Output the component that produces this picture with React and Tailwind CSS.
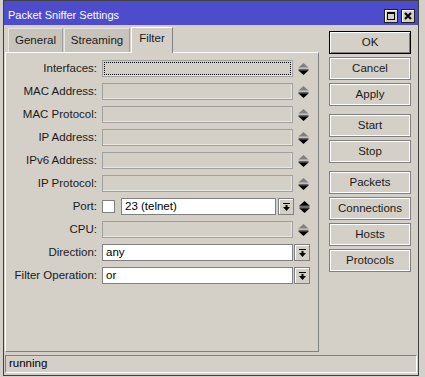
import React from 'react';

const FONT = { fontFamily: '"Liberation Sans", Arial, sans-serif' };

function Spinner({ upActive }) {
  return (
    <svg width="11" height="12" viewBox="0 0 11 12" className="shrink-0">
      <polygon points="5.5,0 10.5,4.5 0.5,4.5" fill={upActive ? '#000' : '#808080'} />
      <rect x="0.5" y="4.5" width="10" height="1" fill={upActive ? '#000' : '#a8a8a8'} />
      <rect x="0.5" y="6.5" width="10" height="1" fill="#000" />
      <polygon points="0.5,7.5 10.5,7.5 5.5,12" fill="#000" />
    </svg>
  );
}

function DropButton({ className = '' }) {
  return (
    <div className={`h-[17px] w-[16px] shrink-0 bg-[#d4d0c8] border border-[#808080] shadow-[inset_1px_1px_0_#fff] flex items-center justify-center ${className}`}>
      <svg width="7" height="8" viewBox="0 0 7 8">
        <rect x="0" y="0" width="7" height="1" fill="#000" />
        <rect x="2.5" y="2" width="2" height="2" fill="#000" />
        <polygon points="0,4 7,4 3.5,8" fill="#000" />
      </svg>
    </div>
  );
}

function Field({ focused }) {
  return (
    <div className="h-[17px] w-[191px] shrink-0 border border-[#a0a0a0] bg-[#d4d0c8] shadow-[inset_-1px_-1px_0_#e8e6e0] p-[1px]">
      {focused && <div className="h-full w-full border border-dotted border-black" />}
    </div>
  );
}

function Row({ label, children }) {
  return (
    <div className="flex h-[17px] items-center">
      <div className="w-[91px] shrink-0 text-right text-[11.5px] text-[#1a1a1a]">{label}</div>
      <div className="ml-[5px] flex items-center">{children}</div>
    </div>
  );
}

function SideButton({ label, primary }) {
  return (
    <div
      className={`h-[23px] w-[82px] flex items-center justify-center text-[11.5px] text-[#1a1a1a] bg-[#d4d0c8] ${
        primary ? 'border border-black shadow-[inset_1px_1px_0_#fff,inset_-1px_-1px_0_#808080]' : 'border border-[#808080] shadow-[inset_1px_1px_0_#fff,inset_-1px_-1px_0_#fff]'
      }`}
    >
      {label}
    </div>
  );
}

export default function App() {
  return (
    <div className="w-[425px] h-[377px] bg-[#d4d0c8] pl-[3px] pr-[6px] pb-[1px] overflow-hidden" style={FONT}>
      <div className="h-full border border-[#404040] bg-[#d4d0c8] flex flex-col">
        {/* Title bar */}
        <div className="h-[24px] bg-[#4c4ccc] flex items-center justify-between pl-[4px] pr-[3px] shrink-0">
          <span className="text-white text-[11px] pt-[4px]">Packet Sniffer Settings</span>
          <div className="flex gap-[3px] pt-[5px]">
            <div className="w-[14px] h-[14px] bg-[#d4d0c8] border border-[#202020] shadow-[inset_1px_1px_0_#fff] flex items-center justify-center">
              <div className="w-[8px] h-[8px] border border-black border-t-2" />
            </div>
            <div className="w-[14px] h-[14px] bg-[#d4d0c8] border border-[#202020] shadow-[inset_1px_1px_0_#fff] flex items-center justify-center">
              <svg width="8" height="8" viewBox="0 0 8 8">
                <path d="M1 1 L7 7 M7 1 L1 7" stroke="#000" strokeWidth="2" />
              </svg>
            </div>
          </div>
        </div>

        {/* Content */}
        <div className="flex flex-1 pt-[2px]">
          <div className="ml-[1px] w-[314px] flex flex-col">
            <div className="flex items-end h-[25px] pl-[3px] gap-[1px]">
              <div className="h-[24px] w-[55px] bg-[#c8c4bc] border-t border-l border-[#e8e6e0] border-r border-r-[#a0a0a0] flex items-center justify-center text-[11.5px] text-[#1a1a1a]">General</div>
              <div className="h-[24px] w-[66px] bg-[#c8c4bc] border-t border-l border-[#e8e6e0] border-r border-r-[#a0a0a0] flex items-center justify-center text-[11.5px] text-[#1a1a1a]">Streaming</div>
              <div className="relative z-10 -mb-[1px] h-[26px] w-[42px] bg-[#d4d0c8] border-t border-l border-white border-r border-r-[#808080] flex items-center justify-center pb-[3px] text-[11.5px] text-[#1a1a1a]">Filter</div>
            </div>
            <div className="h-[300px] border-t border-l border-white border-r border-b border-r-[#808080] border-b-[#808080] pt-[7px] flex flex-col gap-[6px]">
              <Row label="Interfaces:"><Field focused /><span className="ml-[5px]"><Spinner /></span></Row>
              <Row label="MAC Address:"><Field /><span className="ml-[5px]"><Spinner /></span></Row>
              <Row label="MAC Protocol:"><Field /><span className="ml-[5px]"><Spinner /></span></Row>
              <Row label="IP Address:"><Field /><span className="ml-[5px]"><Spinner /></span></Row>
              <Row label="IPv6 Address:"><Field /><span className="ml-[5px]"><Spinner /></span></Row>
              <Row label="IP Protocol:"><Field /><span className="ml-[5px]"><Spinner /></span></Row>
              <Row label="Port:">
                <div className="w-[13px] h-[13px] bg-white border border-[#808080]" />
                <div className="ml-[6px] h-[17px] w-[155px] bg-white border border-[#808080] text-[11.5px] text-black pl-[3px] flex items-center">23 (telnet)</div>
                <DropButton className="ml-[2px]" />
                <span className="ml-[5px]"><Spinner upActive /></span>
              </Row>
              <Row label="CPU:"><Field /><span className="ml-[5px]"><Spinner /></span></Row>
              <Row label="Direction:">
                <div className="h-[17px] w-[191px] bg-white border border-[#808080] text-[11.5px] text-black pl-[3px] flex items-center">any</div>
                <DropButton className="ml-[1px]" />
              </Row>
              <Row label="Filter Operation:">
                <div className="h-[17px] w-[191px] bg-white border border-[#808080] text-[11.5px] text-black pl-[3px] flex items-center">or</div>
                <DropButton className="ml-[1px]" />
              </Row>
            </div>
          </div>

          <div className="ml-[10px] pt-[4px] flex flex-col">
            <div className="flex flex-col gap-[3px]">
              <SideButton label="OK" primary />
              <SideButton label="Cancel" />
              <SideButton label="Apply" />
            </div>
            <div className="flex flex-col gap-[3px] mt-[8px]">
              <SideButton label="Start" />
              <SideButton label="Stop" />
            </div>
            <div className="flex flex-col gap-[3px] mt-[8px]">
              <SideButton label="Packets" />
              <SideButton label="Connections" />
              <SideButton label="Hosts" />
              <SideButton label="Protocols" />
            </div>
          </div>
        </div>

        {/* Status bar */}
        <div className="mx-[1px] mt-[2px] mb-[2px] mr-[1px] h-[18px] border-t border-l border-[#808080] border-r border-b border-r-white border-b-white pl-[3px] flex items-center text-[11.5px] text-black shrink-0">
          running
        </div>
      </div>
    </div>
  );
}
